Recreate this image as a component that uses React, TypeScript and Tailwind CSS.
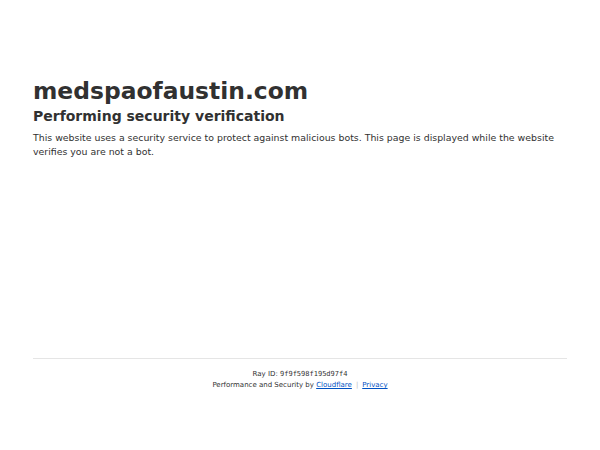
export default function App() {
  return (
    <div className="min-h-[450px] w-[600px] bg-white font-['DejaVu_Sans',sans-serif] text-[#313131]">
      <div className="px-[33px] pt-[77px]">
        <h1 className="text-[23.4px] font-bold leading-[28px]">medspaofaustin.com</h1>
        <h2 className="mt-[1px] text-[14px] font-bold leading-[20px]">Performing security verification</h2>
        <p className="mt-[5px] text-[9.4px] leading-[14px]">
          This website uses a security service to protect against malicious bots. This page is displayed while the website verifies you are not a bot.
        </p>
      </div>
      <div className="mx-[33px] mt-[199px] border-t border-[#e5e5e5] pt-[10px] text-center text-[7px] leading-[11px]">
        <div>
          Ray ID: <code className="font-['DejaVu_Sans_Mono',monospace]">9f9f598f195d97f4</code>
        </div>
        <div>
          Performance and Security by <a className="text-[#0051c3] underline">Cloudflare</a>
          <span className="mx-[4px] text-[#bbb]">|</span>
          <a className="text-[#0051c3] underline">Privacy</a>
        </div>
      </div>
    </div>
  );
}
